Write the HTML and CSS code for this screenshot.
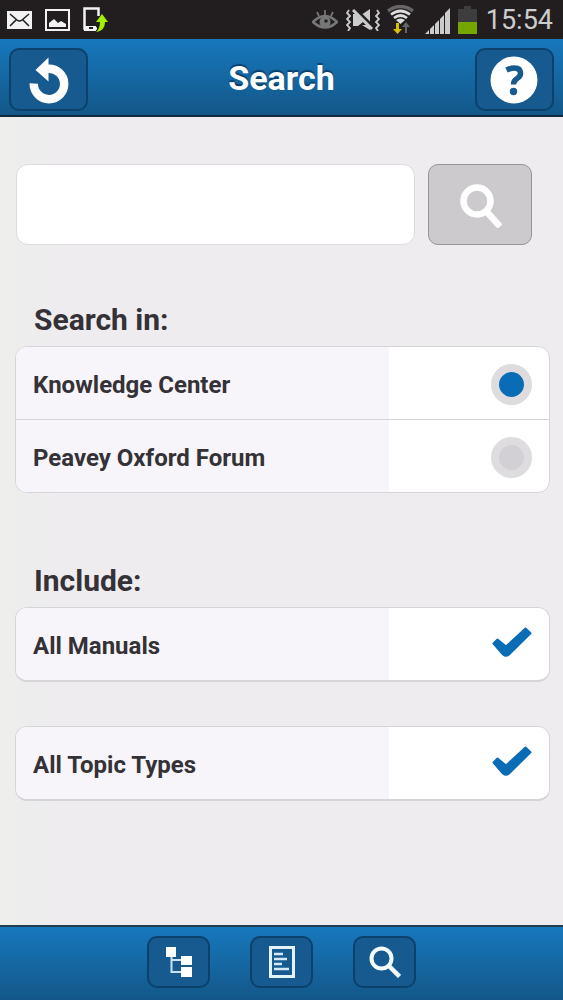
FILE: index.html
```html
<!DOCTYPE html>
<html lang="en">
<head>
<meta charset="utf-8">
<meta name="viewport" content="width=device-width, initial-scale=1">
<title>Search</title>
<link rel="stylesheet" href="styles.css">
</head>
<body>
<div class="status">
  <div class="status-group status-left">
    <svg width="25" height="20" viewBox="0 0 25 20" aria-hidden="true"><path fill="#f2f2f2" d="M0 1h25v18H0z"/><path d="M3 4l7 6q2.500 2 5 0l7-6M3 16l6-6M22 16l-6-6" fill="none" stroke="#222" stroke-width="1.600"/></svg>
    <svg width="25" height="22" viewBox="0 0 25 22" aria-hidden="true"><path d="M1 1h23v20H1z" fill="none" stroke="#f2f2f2" stroke-width="2"/><path fill="#f2f2f2" d="M4 18v-4l5-4 4 4 3-2 5 3v3z"/></svg>
    <svg width="25" height="26" viewBox="0 0 25 26" aria-hidden="true"><path d="M14 21.500H1.500V1.500h14V9" fill="none" stroke="#f2f2f2" stroke-width="2.500"/><path fill="#f2f2f2" d="M1 19h12v5H1z"/><path fill="#222" d="M6 20h4v2H6z"/><path d="M19 7l6 8h-3q0 9-9 10 4-3 4-10h-4z" fill="#a4f000"/></svg>
  </div>
  <div class="status-group status-right">
    <svg width="26" height="22" viewBox="0 0 26 22" aria-hidden="true"><path d="M1 13q12-12 24 0-12 11-24 0z" fill="none" stroke="#777" stroke-width="2.500"/><circle cx="13" cy="13" r="5.500" fill="#777"/><circle cx="14" cy="12" r="1.800" fill="#222"/><path d="M13 6V1M7 7L5 3M19 7l2-4" stroke="#777" stroke-width="1.700"/></svg>
    <svg class="mute" width="34" height="22" viewBox="0 0 34 22" aria-hidden="true"><path d="M7 5h4l6 6v2l-5 4H7zM15 6l9-6v14zM16 16h8v5z" fill="#ccc"/><path d="M8 0l19 19" stroke="#222" stroke-width="5"/><path d="M7 1l19 19" stroke="#ccc" stroke-width="3"/><path d="M3 1L1 4l3 3-3 3 3 3-3 3 3 3-2 3M31 1l2 3-3 3 3 3-3 3 3 3-3 3 2 3" fill="none" stroke="#ccc" stroke-width="1.800"/></svg>
    <svg class="wifi" width="27" height="30" viewBox="0 0 27 30" aria-hidden="true"><path d="M1 6q12.500-9 25 0" fill="none" stroke="#666" stroke-width="3.500"/><path d="M4 9.500q9.500-7 19 0M7 13q6.500-5 13 0" fill="none" stroke="#ddd" stroke-width="2.700"/><path d="M9 15q4.500-3 9 0l-4.500 4z" fill="#ddd"/><path d="M9 18h3v6h3l-4.500 5L6 24h3z" fill="#d8bd00"/><path d="M18 28v-6h-3l4-5 4 5h-3v6z" fill="#666"/></svg>
    <svg class="signal" width="26" height="28" viewBox="0 0 26 28" aria-hidden="true"><path d="M0 28l4-4v4zM5 28v-5l4-4v9zM10 28V18l4-4v14zM15 28V13l4-4v19zM20 28V7l5-5v26z" fill="#ccc"/></svg>
    <svg class="battery" width="19" height="30" viewBox="0 0 19 30" aria-hidden="true"><path d="M0 4h6V1h7v3h6v14H0z" fill="#3d3d3d"/><path d="M0 17h19v12H0z" fill="#76a600"/></svg>
    <time class="clock">15:54</time>
  </div>
</div>

<header class="topbar">
  <button class="bar-button" type="button" aria-label="Back">
    <svg width="42" height="48" viewBox="0 0 42 48" aria-hidden="true"><path d="M5.800 27.500A15.200 15.200 0 1 0 20 12.800" fill="none" stroke="#fff" stroke-width="8.500"/><path d="M20.500 1.500v24L7.500 14z" fill="#fff"/></svg>
  </button>
  <h1 class="title">Search</h1>
  <button class="bar-button" type="button" aria-label="Help">
    <svg width="48" height="48" viewBox="0 0 48 48" aria-hidden="true"><circle cx="24" cy="24" r="23.500" fill="#fff"/><path d="M16.500 14q4-2 8-2 6 0 6 5.500 0 3-4 5.500-3 2-3 5.500" fill="none" stroke="#165a90" stroke-width="5.500"/><circle cx="23.500" cy="35.500" r="3.700" fill="#165a90"/></svg>
  </button>
</header>

<main class="content">
  <form class="search-form" role="search">
    <input class="search-input" type="text" aria-label="Search text">
    <button class="search-button" type="button" aria-label="Search">
      <svg width="44" height="46" viewBox="0 0 44 46" aria-hidden="true"><circle cx="19" cy="19" r="13.500" fill="none" stroke="#fff" stroke-width="6.500"/><path d="M27.500 28.500l14.500 16" stroke="#fff" stroke-width="6.500"/></svg>
    </button>
  </form>

  <h2 class="heading">Search in:</h2>
  <div class="list">
    <div class="row"><label class="row-label" for="knowledge">Knowledge Center</label><div class="row-control"><input class="radio" id="knowledge" name="source" type="radio" checked></div></div>
    <div class="row"><label class="row-label" for="forum">Peavey Oxford Forum</label><div class="row-control"><input class="radio" id="forum" name="source" type="radio"></div></div>
  </div>

  <h2 class="heading heading-include">Include:</h2>
  <div class="list list-raised">
    <div class="row"><label class="row-label" for="manuals">All Manuals</label><div class="row-control"><span class="check"><input class="check-input" id="manuals" type="checkbox" checked><svg class="check-mark" width="40" height="30" viewBox="0 0 40 30" aria-hidden="true"><path d="M1.500 16.500l4-4 8.500 7L33.500 1.500l5 4.800L17 27.500q-3 2.500-6 0z" fill="#0b6cb6" stroke="#0b6cb6" stroke-width="2" stroke-linejoin="round"/></svg></span></div></div>
  </div>
  <div class="list list-raised">
    <div class="row"><label class="row-label" for="topics">All Topic Types</label><div class="row-control"><span class="check"><input class="check-input" id="topics" type="checkbox" checked><svg class="check-mark" width="40" height="30" viewBox="0 0 40 30" aria-hidden="true"><path d="M1.500 16.500l4-4 8.500 7L33.500 1.500l5 4.800L17 27.500q-3 2.500-6 0z" fill="#0b6cb6" stroke="#0b6cb6" stroke-width="2" stroke-linejoin="round"/></svg></span></div></div>
  </div>
</main>

<nav class="bottombar" aria-label="Main">
  <button class="nav-button" type="button" aria-label="Contents">
    <svg width="26" height="32" viewBox="0 0 26 32" aria-hidden="true"><path d="M5.500 8v18H18M5.500 14H18" fill="none" stroke="#c9e3f4" stroke-width="2"/><path d="M0 1h10v10H0zM15 10h11v9H15zM15 21h11v10H15z" fill="#fff"/></svg>
  </button>
  <button class="nav-button" type="button" aria-label="Topic">
    <svg width="26" height="32" viewBox="0 0 26 32" aria-hidden="true"><path d="M1.500 1.500h23v29h-23z" fill="none" stroke="#e2f3fb" stroke-width="3"/><path d="M5 8h9M5 13h13M5 18h8M5 23h15" stroke="#d3e9f5" stroke-width="2.500"/></svg>
  </button>
  <button class="nav-button" type="button" aria-label="Search">
    <svg width="32" height="32" viewBox="0 0 32 32" aria-hidden="true"><circle cx="12.500" cy="12.500" r="10" fill="none" stroke="#f4fbff" stroke-width="4"/><path d="M19.500 19.500l11 11" stroke="#f4fbff" stroke-width="4.500"/></svg>
  </button>
</nav>
</body>
</html>
```

FILE: styles.css
```css
* {
  box-sizing: border-box;
}

body {
  margin: 0;
  min-height: 100vh;
  display: flex;
  flex-direction: column;
  background: linear-gradient(90deg, #eeeeec, #eeecef 60px);
  color: #343236;
  font-family: Roboto, "Liberation Sans", sans-serif;
}

svg {
  display: block;
}

button,
input {
  margin: 0;
  padding: 0;
  font: inherit;
}

.status {
  display: flex;
  justify-content: space-between;
  align-items: center;
  height: 39px;
  padding: 0 10px 0 7px;
  background: #221e20;
}

.status-group {
  display: flex;
  align-items: center;
}

.status-left {
  gap: 13px;
}

.mute {
  margin-left: 8px;
}

.wifi {
  margin-left: 7px;
}

.signal {
  margin-left: 11px;
}

.battery {
  margin-left: 7px;
}

.clock {
  margin-left: 9px;
  padding-top: 1px;
  color: #ccc;
  font-size: 27px;
  line-height: 38px;
}

.topbar {
  display: flex;
  justify-content: space-between;
  align-items: flex-start;
  height: 78px;
  padding: 9px;
  border-bottom: 2px solid #10293f;
  background: linear-gradient(#1778bd, #135788);
}

.bar-button,
.nav-button {
  display: flex;
  align-items: center;
  justify-content: center;
  border: 2px solid #0c416b;
  background: #165a90;
}

.bar-button {
  width: 79px;
  height: 63px;
  border-radius: 10px;
}

.title {
  margin: 0;
  color: #fff;
  font-size: 34px;
  font-weight: 700;
  line-height: 60px;
  text-shadow: 0 -2px 1px #0c3f68;
}

.content {
  flex: 1;
  padding: 47px 13px 44px 15px;
}

.search-form {
  display: flex;
  gap: 13px;
  padding: 0 18px 0 1px;
}

.search-input {
  flex: 1;
  min-width: 0;
  height: 81px;
  padding: 0 16px;
  border: 1px solid #dddbde;
  border-radius: 12px;
  background: #fff;
  font-size: 24px;
}

.search-button {
  display: flex;
  align-items: center;
  justify-content: center;
  width: 104px;
  height: 81px;
  border: 1px solid #969498;
  border-radius: 10px;
  background: #cccacd;
}

.heading {
  margin: 57px 0 8px 19px;
  font-size: 30px;
  font-weight: 700;
  line-height: 36px;
}

.heading-include {
  margin-top: 70px;
}

.list {
  overflow: hidden;
  border: 1px solid #d6d4d8;
  border-radius: 12px;
  background: #fff;
}

.list-raised {
  border-bottom-width: 2px;
}

.list + .list {
  margin-top: 44px;
}

.row {
  display: grid;
  grid-template-columns: 7fr 3fr;
  height: 72px;
}

.row + .row {
  height: 73px;
  border-top: 1px solid #d6d4d8;
}

.row-label {
  display: flex;
  align-items: center;
  padding: 3px 17px 0;
  background: #f7f5f9;
  font-size: 24px;
  font-weight: 700;
}

.row-control {
  display: flex;
  align-items: center;
  justify-content: flex-end;
  padding: 2px 17px 0 0;
}

.radio {
  width: 41px;
  height: 41px;
  appearance: none;
  border: 8px solid #dedcdf;
  border-radius: 50%;
  background: #d2d0d4;
}

.radio:checked {
  background: #0b6cb6;
}

.check {
  display: grid;
  margin-bottom: 6px;
}

.check-input,
.check-mark {
  grid-area: 1 / 1;
}

.check-input {
  width: 40px;
  height: 30px;
  appearance: none;
}

.check-mark {
  visibility: hidden;
  pointer-events: none;
}

.check-input:checked + .check-mark {
  visibility: visible;
}

.bottombar {
  display: flex;
  justify-content: center;
  gap: 40px;
  height: 75px;
  padding-top: 9px;
  border-top: 2px solid #203e50;
  background: linear-gradient(#1778bd, #135788);
}

.nav-button {
  width: 63px;
  height: 52px;
  border-radius: 10px;
}
```
